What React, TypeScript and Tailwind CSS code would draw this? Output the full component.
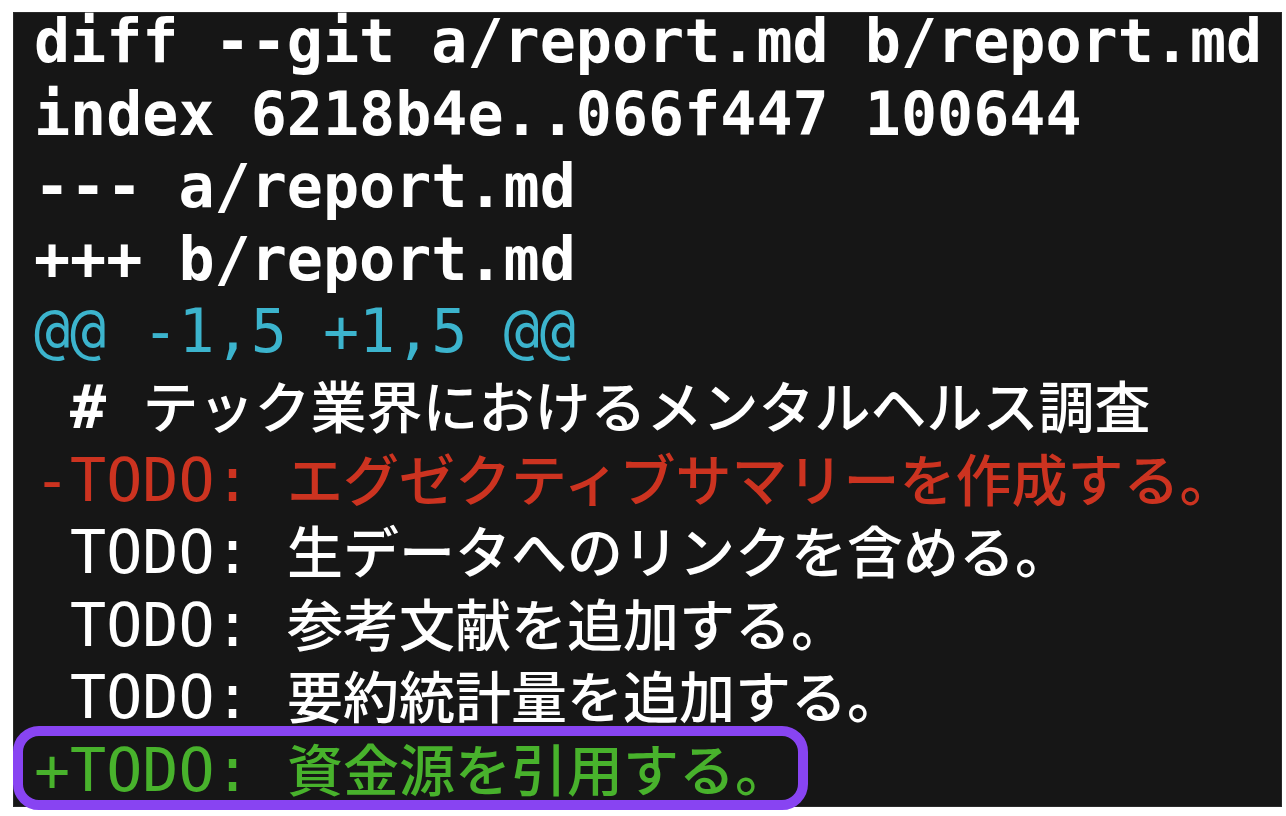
const mono = "font-['DejaVu_Sans_Mono','Liberation_Mono',monospace]";
const jp = "font-['Noto_Sans_CJK_JP','Noto_Sans',sans-serif] font-medium text-[56px]";

type Row = { sign: string; label: string; text: string; tone: 'ctx' | 'del' | 'add' };

const todoRows: Row[] = [
  { sign: '-', label: 'TODO:', text: 'エグゼクティブサマリーを作成する。', tone: 'del' },
  { sign: ' ', label: 'TODO:', text: '生データへのリンクを含める。', tone: 'ctx' },
  { sign: ' ', label: 'TODO:', text: '参考文献を追加する。', tone: 'ctx' },
  { sign: ' ', label: 'TODO:', text: '要約統計量を追加する。', tone: 'ctx' },
];

const toneClass = {
  ctx: 'text-white',
  del: 'text-[#cc3320]',
  add: 'text-[#48b22c]',
};

function HeaderLine({ children }: { children: string }) {
  return (
    <div className={`h-[72.6px] leading-[72.6px] whitespace-pre font-bold text-white ${mono} text-[60px]`}>
      {children}
    </div>
  );
}

function TodoLine({ row }: { row: Row }) {
  return (
    <div className={`h-[72.6px] leading-[72.6px] whitespace-pre ${toneClass[row.tone]}`}>
      <span className={`${mono} text-[60px]`}>{`${row.sign}${row.label} `}</span>
      <span className={jp}>{row.text}</span>
    </div>
  );
}

export default function App() {
  return (
    <div className="w-[1286px] h-[816px] bg-white pt-[12px] pl-[13px] overflow-hidden">
      <div className="w-[1269px] h-[795px] bg-[#161616] pl-[20px] border border-[#2a2a2a]">
        <div className="-mt-[8px]">
          <HeaderLine>diff --git a/report.md b/report.md</HeaderLine>
          <HeaderLine>index 6218b4e..066f447 100644</HeaderLine>
          <HeaderLine>--- a/report.md</HeaderLine>
          <HeaderLine>+++ b/report.md</HeaderLine>

          {/* hunk header */}
          <div className={`h-[72.6px] leading-[72.6px] whitespace-pre text-[#3cb4cd] ${mono} text-[60px]`}>
            @@ -1,5 +1,5 @@
          </div>

          <div className="h-[72.6px] leading-[72.6px] whitespace-pre text-white">
            <span className={`${mono} text-[60px] font-bold`}>{' # '}</span>
            <span className={jp}>テック業界におけるメンタルヘルス調査</span>
          </div>

          {todoRows.map((row, i) => (
            <TodoLine key={i} row={row} />
          ))}

          {/* highlighted added line */}
          <div className="relative">
            <div className="absolute left-[-21px] top-[-5px] w-[795px] h-[84px] rounded-[26px] border-[10px] border-[#8844f2]" />
            <TodoLine row={{ sign: '+', label: 'TODO:', text: '資金源を引用する。', tone: 'add' }} />
          </div>
        </div>
      </div>
    </div>
  );
}
